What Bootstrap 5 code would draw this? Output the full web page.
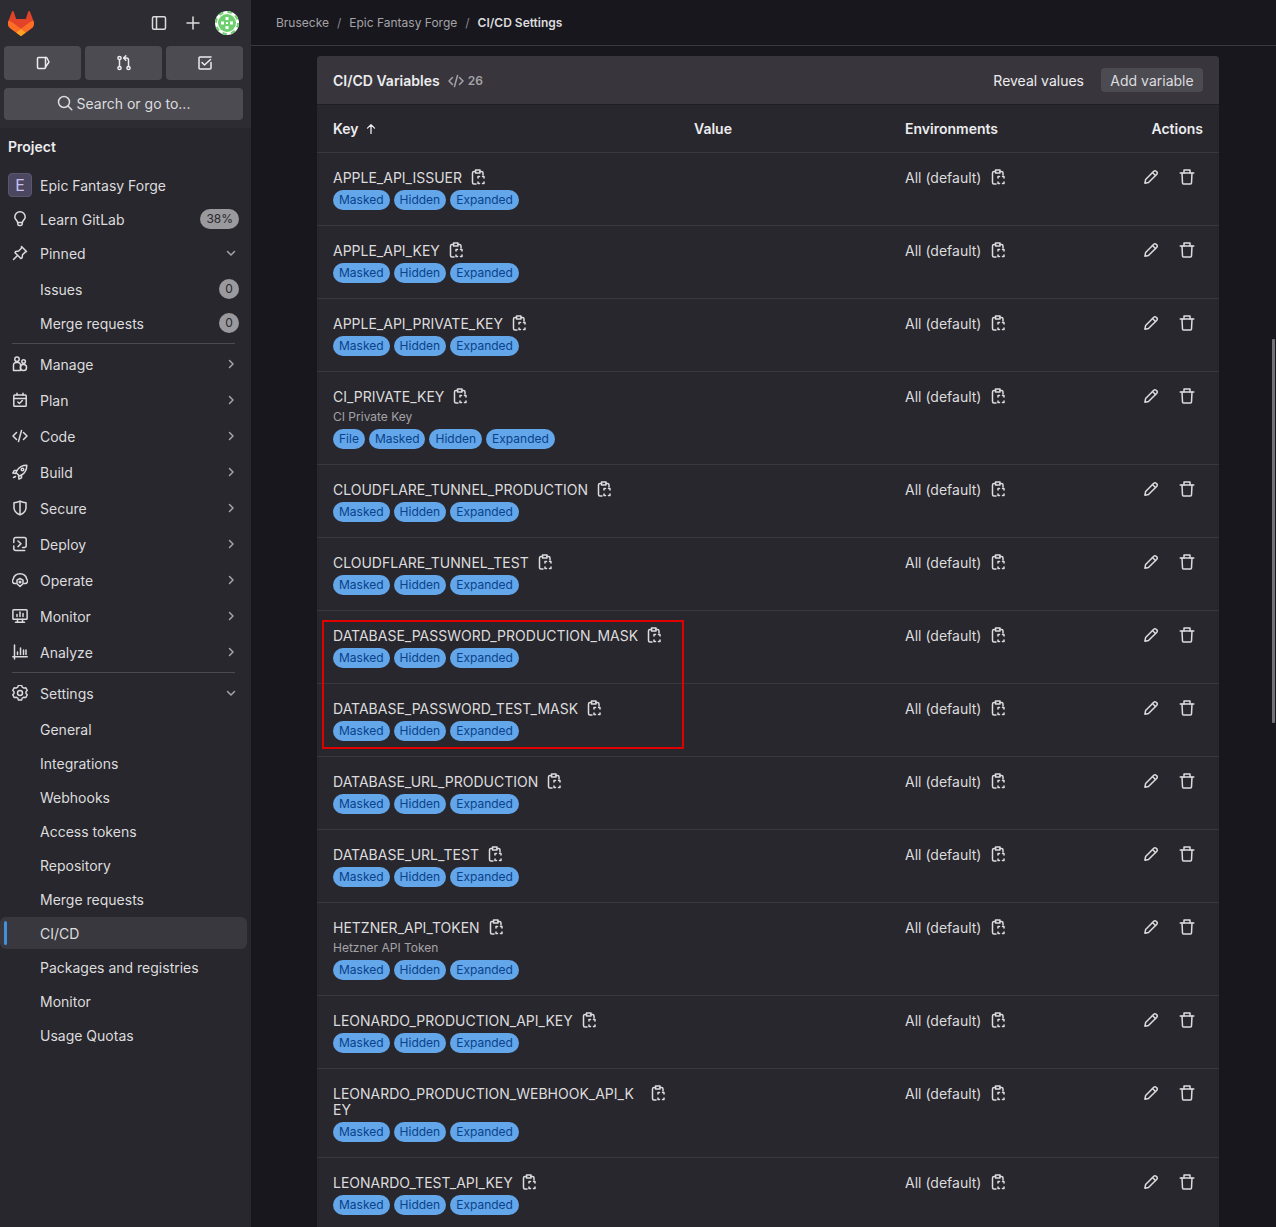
<!DOCTYPE html>
<html lang="en">
<head>
<meta charset="UTF-8">
<title>CI/CD Settings</title>
<link href="https://cdn.jsdelivr.net/npm/bootstrap@5.3.2/dist/css/bootstrap.min.css" rel="stylesheet">
<style>
    html, body { height: 100%; overflow: hidden; }
    body { background: #18171d; color: #ececef; font-family: Inter, "Noto Sans", sans-serif; font-size: 14px; }
    .ico { width: 16px; height: 16px; fill: none; stroke: currentColor; stroke-width: 1.5; stroke-linecap: round; stroke-linejoin: round; flex-shrink: 0; }
    .app-shell { height: 1227px; }
    .side { width: 251px; background: #28272d; flex-shrink: 0; color: #dcdcde; }
    .side-top { background: #2d2c32; height: 128px; padding: 0 4px; }
    .brand-row { height: 46px; padding: 0 8px 0 4px; }
    .plus-ico { margin-left: 18px; margin-right: 14px; }
    .quick-btn { flex: 1; height: 34px; background: #4c4b52; border-radius: 4px; color: #ececef; }
    .search-btn { height: 32px; margin-top: 8px; margin-right: 4px; padding-bottom: 2px; background: #4c4b52; border-radius: 4px; color: #dcdcde; }
    .quick-row { margin-right: 4px; gap: 4px; }
    .side-nav { padding: 0 4px 0 0; }
    .proj-title { font-weight: 600; height: 41px; padding-left: 8px; padding-top: 8px; color: #ececef; }
    .side-item { height: 32px; margin-bottom: 2px; padding-left: 12px; padding-right: 8px; gap: 12px; position: relative; border-radius: 6px; }
    .side-item.grp { margin-bottom: 4px; }
    .side-item .lbl { flex: 1; }
    .side-item .chev { width: 16px; height: 16px; color: #a4a3a8; }
    .side-item.on { background: #3a383f; }
    .side-item.on::before { content: ""; position: absolute; left: 4px; top: 4px; width: 3px; height: 24px; background: #428fdc; border-radius: 2px; }
    .icon-gap { width: 16px; flex-shrink: 0; }
    .proj-av { width: 24px; height: 24px; margin-left: -4px; margin-right: -4px; background: #4b4760; border: 1px solid #5a5670; border-radius: 4px; color: #c9c0f0; font-size: 16px; line-height: 22px; text-align: center; flex-shrink: 0; }
    .cnt-pill { background: #9a999e; color: #28272d; border-radius: 10px; height: 20px; min-width: 20px; padding: 0 6px; font-size: 12px; line-height: 20px; text-align: center; }
    .side-rule { height: 1px; background: #4c4b52; margin: 0 12px 4px 12px; }
    .crumb-bar { height: 46px; border-bottom: 1px solid #3a383f; padding-left: 25px; font-size: 12px; color: #89888d; gap: 8px; }
    .crumb-bar a { color: #a4a3a8; }
    .crumb-bar b { font-weight: 600; color: #dcdcde; }
    .main-wrap { width: 902px; margin-left: 66px; margin-top: 10px; position: relative; }
    .var-box { background: #28272d; border-radius: 4px 4px 0 0; }
    .var-head { height: 49px; background: #38363c; border-bottom: 1px solid #1f1e24; padding: 0 16px; border-radius: 4px 4px 0 0; }
    .var-head b { font-weight: 600; color: #ececef; }
    .var-count { color: #a4a3a8; font-weight: 600; font-size: 12px; gap: 4px; margin-left: 8px; margin-top: 1px; }
    .add-btn { background: #4c4b52; border-radius: 4px; height: 24px; line-height: 25px; width: 102px; text-align: center; color: #dcdcde; margin-left: 17px; }
    .var-table { table-layout: fixed; margin: 0; --bs-table-bg: transparent; --bs-table-color: #ececef; color: #ececef; font-size: 14px; }
    .col-key { width: 361px; }
    .col-val { width: 211px; }
    .col-env { width: 200px; }
    .var-table th { height: 47px; padding: 0 16px; vertical-align: middle; font-weight: 600; border-bottom: 1px solid #3a383f; }
    .var-table td { padding: 17px 16px 15px; line-height: 16px; vertical-align: top; border-bottom: 1px solid #3a383f; color: #dcdcde; }
    .var-table td.key-cell { padding-right: 0; }
    .var-table td.act-cell { padding: 8px 16px 0; }
    .sort-ico { width: 14px; height: 14px; margin-left: 1px; margin-top: 1px; }
    .key-line { display: flex; align-items: flex-start; }
    .key-txt { max-width: 309px; word-break: break-all; }
    .copy-slot { width: 32px; height: 16px; margin-top: -1px; display: flex; align-items: center; justify-content: center; flex-shrink: 0; color: #dcdcde; }
    .env-line .copy-slot { margin-left: 1px; }
    .var-desc { font-size: 12px; color: #a4a3a8; margin-top: 4px; }
    .tag-row { gap: 4px; margin-top: 4px; }
    .var-tag { background: #63a6e9; color: #09428a; font-size: 12px; line-height: 20px; height: 20px; padding: 0 6px; border-radius: 10px; }
    .act-btn { width: 32px; height: 32px; color: #dcdcde; }
    .red-box { position: absolute; left: 5px; top: 564px; width: 362px; height: 129px; border: 2px solid #e00000; pointer-events: none; }
    .fake-scroll { position: fixed; left: 1272px; top: 339px; width: 3px; height: 384px; background: #737278; border-radius: 1px; }
</style>
</head>
<body>

<svg width="0" height="0" class="position-absolute">
    <symbol id="i-copy" viewBox="0 0 16 16"><path d="M5.500 2.500H4A1.500 1.500 0 0 0 2.500 4v9.500A1.500 1.500 0 0 0 4 15h2"/><path d="M5.500 1H10v3H5.500z"/><path d="M10 2.500h1.500A1.500 1.500 0 0 1 13 4v2"/><path d="M8 9V7.500h1.500M12.500 7.500H14V9M14 13v1.500h-1.500M9.500 14.500H8V13"/></symbol>
    <symbol id="i-pencil" viewBox="0 0 16 16"><path d="M10.800 2.200a1.600 1.600 0 0 1 2.300 0l.7.7a1.600 1.600 0 0 1 0 2.300L5.500 13.500l-3.600.7.700-3.600z"/><path d="M9.500 3.500l3 3"/></symbol>
    <symbol id="i-trash" viewBox="0 0 16 16"><path d="M1.200 4h13.600"/><path d="M5 4V.9h6V4"/><path d="M3 4l.5 10a1 1 0 0 0 1 1h7a1 1 0 0 0 1-1L13 4"/></symbol>
    <symbol id="i-down" viewBox="0 0 16 16"><path d="M4.500 6.500L8 10l3.500-3.500"/></symbol>
    <symbol id="i-right" viewBox="0 0 16 16"><path d="M6.500 4.500L10 8l-3.500 3.500"/></symbol>
    <symbol id="i-code" viewBox="0 0 16 16"><path d="M4.500 4.500L1 8l3.500 3.500M11.500 4.500L15 8l-3.500 3.500M9.500 2.500l-3 11"/></symbol>
    <symbol id="i-issues" viewBox="0 0 16 16"><path d="M2.500 3.500a1 1 0 0 1 1-1h7v10a1 1 0 0 1-1 1h-6a1 1 0 0 1-1-1z"/><path d="M10.500 2.500h1.200l2.300 4.500-3.500 5"/></symbol>
    <symbol id="i-mr" viewBox="0 0 16 16"><circle cx="3.500" cy="3" r="1.600"/><circle cx="3.500" cy="13" r="1.600"/><circle cx="12.500" cy="13" r="1.600"/><path d="M3.500 4.600v6.800M12.500 11.400V5a2 2 0 0 0-2-2H8M9.800 .8L7.600 3l2.200 2.200"/></symbol>
    <symbol id="i-todo" viewBox="0 0 16 16"><path d="M14 7.500V13a1 1 0 0 1-1 1H3a1 1 0 0 1-1-1V3a1 1 0 0 1 1-1h11"/><path d="M5 7.500l2.500 2.500L13.500 4.500"/></symbol>
    <symbol id="i-search" viewBox="0 0 16 16"><circle cx="7" cy="7" r="5.500"/><path d="M11 11l3.800 3.800"/></symbol>
    <symbol id="i-panel" viewBox="0 0 16 16"><rect x="1.500" y="1.800" width="13" height="12.400" rx="1.500"/><path d="M5.500 1.800v12.400"/></symbol>
    <symbol id="i-plus" viewBox="0 0 16 16"><path d="M8 2v12M2 8h12"/></symbol>
    <symbol id="i-bulb" viewBox="0 0 16 16"><path d="M5.500 11.500C5.500 9.500 2.800 8.500 2.800 6a5.200 5.200 0 0 1 10.400 0c0 2.500-2.700 3.500-2.700 5.500z"/><path d="M5.800 11.500v1.500a1.500 1.500 0 0 0 1.500 1.500h1.400a1.500 1.500 0 0 0 1.500-1.500v-1.500"/></symbol>
    <symbol id="i-pin" viewBox="0 0 16 16"><path d="M9.500 1.500l5 5-1.300.6-2.700 2.700-.4 3-1.300 .7-5.800-5.800.7-1.300 3-.4 2.700-2.700z"/><path d="M5 11l-3.500 3.500"/></symbol>
    <symbol id="i-manage" viewBox="0 0 16 16"><circle cx="5" cy="3.200" r="2.200"/><path d="M1.500 14.500V9a2.500 2.500 0 0 1 2.500-2.500h1.900A2.500 2.500 0 0 1 8.500 9v5.500z"/><circle cx="11.600" cy="5.500" r="1.800"/><rect x="8.500" y="8.400" width="6" height="6.100" rx="2.800"/></symbol>
    <symbol id="i-plan" viewBox="0 0 16 16"><rect x="1.800" y="3" width="12.400" height="11.200" rx=".8"/><path d="M1.800 6.500h12.400M5 1.200V3M11 1.200V3M5.800 10l1.600 1.500 3-3"/></symbol>
    <symbol id="i-build" viewBox="0 0 16 16"><path d="M5 6.500C7 3 10.500 1.200 14.800 1.200c0 4.300-1.800 7.800-5.300 9.800L7.500 12 4 8.500z"/><circle cx="10.500" cy="5.500" r="1.300"/><path d="M5 6.500H2.200L.8 9l3.200.5M9.500 11v2.800L7 15.200l-.5-3.200M1.500 13.500l2-1"/></symbol>
    <symbol id="i-secure" viewBox="0 0 16 16"><path d="M8 1.200c2 1 4 1.500 6 1.500v4.800c0 3.500-2.500 6-6 7.300-3.500-1.300-6-3.800-6-7.300V2.700c2 0 4-.5 6-1.500z"/><path d="M8 1.500v13"/></symbol>
    <symbol id="i-deploy" viewBox="0 0 16 16"><path d="M1.800 6.500v-3a2 2 0 0 1 2-2h8.400a2 2 0 0 1 2 2v6a2 2 0 0 1-2 2h-1.700"/><path d="M1.800 10v2.500a2 2 0 0 0 2 2h8.900"/><path d="M6 5l3 2.800-3 2.800"/></symbol>
    <symbol id="i-operate" viewBox="0 0 16 16"><path d="M4 11.500H3a2.500 2.500 0 0 1-1.800-4.300A7 7 0 0 1 8 1.800a7 7 0 0 1 6.800 5.400A2.500 2.500 0 0 1 13 11.500h-1"/><path d="M8 6.500l3 1.700v3.600L8 14.500l-3-2.700V8.200z"/><circle cx="8" cy="10" r=".8"/></symbol>
    <symbol id="i-monitor" viewBox="0 0 16 16"><rect x=".9" y="1.800" width="14.200" height="9.500" rx=".8"/><path d="M5.500 11.300v2.900M10.500 11.300v2.900M3.500 14.300h9M5 8.500V6.500M8 8.500V4M11 8.500V5.500"/></symbol>
    <symbol id="i-analyze" viewBox="0 0 16 16"><path d="M2.500 1v14M.8 12.800h14.400M5.500 10.500V8M8.500 10.500V4M11.500 10.500V6M14 10.500V6"/></symbol>
    <symbol id="i-gear" viewBox="0 0 16 16"><path d="M6.300 1.300h3.400l.6 1.900 1.800 1 1.900-.4 1.600 2.900-1.300 1.300v2l1.300 1.300-1.600 2.900-1.900-.4-1.800 1-.6 1.900H6.300l-.6-1.900-1.800-1-1.900.4L.4 11.300 1.700 10V8L.4 6.700 2 3.800l1.900.4 1.800-1z" transform="translate(.4 -.9) scale(.95)"/><circle cx="8" cy="8" r="2.500"/></symbol>
    <symbol id="i-up" viewBox="0 0 16 16"><path d="M8 13V3.500M4 7l4-4 4 4"/></symbol>
</svg>

<div class="app-shell d-flex">
    <aside class="side">
        <div class="side-top">
            <div class="brand-row d-flex align-items-center justify-content-between">
                <svg width="26" height="25" viewBox="0 0 25 24">
                    <path fill="#E24329" d="m24.507 9.500-.034-.09L21.082.562a.896.896 0 0 0-1.694.091l-2.290 7.010H7.825L5.535.653a.898.898 0 0 0-1.694-.09L.451 9.411.416 9.500a6.297 6.297 0 0 0 2.090 7.278l.012.01.03.022 5.160 3.867 2.560 1.935 1.554 1.176a1.051 1.051 0 0 0 1.268 0l1.555-1.176 2.560-1.935 5.197-3.890.014-.01A6.297 6.297 0 0 0 24.507 9.500Z"/>
                    <path fill="#FC6D26" d="m24.507 9.500-.034-.09a11.440 11.440 0 0 0-4.560 2.051l-7.447 5.632 4.742 3.584 5.197-3.890.014-.01A6.297 6.297 0 0 0 24.507 9.500Z"/>
                    <path fill="#FCA326" d="m7.707 20.677 2.560 1.935 1.555 1.176a1.051 1.051 0 0 0 1.268 0l1.555-1.176 2.560-1.935-4.743-3.584-4.755 3.584Z"/>
                    <path fill="#FC6D26" d="M5.010 11.461a11.430 11.430 0 0 0-4.560-2.050L.416 9.500a6.297 6.297 0 0 0 2.090 7.278l.012.01.03.022 5.160 3.867 4.745-3.584-7.444-5.632Z"/>
                </svg>
                <div class="d-flex align-items-center">
                    <svg class="ico"><use href="#i-panel"/></svg>
                    <svg class="ico plus-ico"><use href="#i-plus"/></svg>
                    <svg width="24" height="24" viewBox="0 0 24 24">
                        <circle cx="12" cy="12" r="12" fill="#ffffff"/>
                        <circle cx="12" cy="12" r="9" fill="#6dcf6d"/>
                        <circle cx="12" cy="12" r="11" fill="none" stroke="#6dcf6d" stroke-width="2" stroke-dasharray="4.500 4.150"/>
                        <path fill="#ffffff" d="M10.500 6h3v3h-3zM6 10.500h3v3H6zM15 10.500h3v3h-3zM10.500 15h3v3h-3zM11 11h2v2h-2z"/>
                    </svg>
                </div>
            </div>
            <div class="quick-row d-flex">
                <div class="quick-btn d-flex align-items-center justify-content-center"><svg class="ico"><use href="#i-issues"/></svg></div>
                <div class="quick-btn d-flex align-items-center justify-content-center"><svg class="ico"><use href="#i-mr"/></svg></div>
                <div class="quick-btn d-flex align-items-center justify-content-center"><svg class="ico"><use href="#i-todo"/></svg></div>
            </div>
            <div class="search-btn d-flex align-items-center justify-content-center gap-1"><svg class="ico"><use href="#i-search"/></svg>Search or go to...</div>
        </div>
        <nav class="side-nav" id="sideNav">
            <div class="proj-title">Project</div>
        </nav>
    </aside>

    <main class="flex-grow-1">
        <div class="crumb-bar d-flex align-items-center">
            <a class="text-decoration-none">Brusecke</a><span>/</span>
            <a class="text-decoration-none">Epic Fantasy Forge</a><span>/</span>
            <b>CI/CD Settings</b>
        </div>
        <div class="main-wrap">
            <div class="var-box">
                <div class="var-head d-flex align-items-center">
                    <b>CI/CD Variables</b>
                    <span class="var-count d-flex align-items-center"><svg class="ico"><use href="#i-code"/></svg>26</span>
                    <span class="ms-auto">Reveal values</span>
                    <span class="add-btn">Add variable</span>
                </div>
                <table class="table var-table">
                    <colgroup><col class="col-key"><col class="col-val"><col class="col-env"><col></colgroup>
                    <thead>
                        <tr>
                            <th><span class="d-flex align-items-center gap-1">Key <svg class="ico sort-ico"><use href="#i-up"/></svg></span></th>
                            <th>Value</th>
                            <th>Environments</th>
                            <th class="text-end">Actions</th>
                        </tr>
                    </thead>
                    <tbody id="varRows"></tbody>
                </table>
            </div>
            <div class="red-box"></div>
        </div>
    </main>
</div>
<div class="fake-scroll"></div>

<script>
    const ic = (n, cls = 'ico') => `<svg class="${cls}"><use href="#i-${n}"/></svg>`;

    // sidebar
    const chev = d => `<span class="chev d-flex">${ic(d)}</span>`;
    const rule = '<div class="side-rule"></div>';
    const row = (icon, label, tail = '', cls = '') =>
        `<div class="side-item d-flex align-items-center ${cls}">${icon}<span class="lbl">${label}</span>${tail}</div>`;
    const gap = '<span class="icon-gap"></span>';
    let nav = '';
    nav += row('<span class="proj-av">E</span>', 'Epic Fantasy Forge');
    nav += row(ic('bulb'), 'Learn GitLab', '<span class="cnt-pill">38%</span>');
    nav += row(ic('pin'), 'Pinned', chev('down'), 'grp');
    nav += row(gap, 'Issues', '<span class="cnt-pill px-0">0</span>');
    nav += row(gap, 'Merge requests', '<span class="cnt-pill px-0">0</span>', 'grp');
    nav += rule;
    [['manage', 'Manage'], ['plan', 'Plan'], ['code', 'Code'], ['build', 'Build'], ['secure', 'Secure'],
     ['deploy', 'Deploy'], ['operate', 'Operate'], ['monitor', 'Monitor'], ['analyze', 'Analyze']]
        .forEach(([i, l]) => { nav += row(ic(i), l, chev('right'), 'grp'); });
    nav += rule;
    nav += row(ic('gear'), 'Settings', chev('down'), 'grp');
    ['General', 'Integrations', 'Webhooks', 'Access tokens', 'Repository', 'Merge requests', 'CI/CD',
     'Packages and registries', 'Monitor', 'Usage Quotas']
        .forEach(l => { nav += row(gap, l, '', l === 'CI/CD' ? 'on' : ''); });
    document.getElementById('sideNav').insertAdjacentHTML('beforeend', nav);

    // variables table
    const vars = [
        ['APPLE_API_ISSUER'], ['APPLE_API_KEY'], ['APPLE_API_PRIVATE_KEY'],
        ['CI_PRIVATE_KEY', 'CI Private Key', true],
        ['CLOUDFLARE_TUNNEL_PRODUCTION'], ['CLOUDFLARE_TUNNEL_TEST'],
        ['DATABASE_PASSWORD_PRODUCTION_MASK'], ['DATABASE_PASSWORD_TEST_MASK'],
        ['DATABASE_URL_PRODUCTION'], ['DATABASE_URL_TEST'],
        ['HETZNER_API_TOKEN', 'Hetzner API Token'],
        ['LEONARDO_PRODUCTION_API_KEY'], ['LEONARDO_PRODUCTION_WEBHOOK_API_KEY'], ['LEONARDO_TEST_API_KEY']
    ];
    document.getElementById('varRows').innerHTML = vars.map(([key, desc, file]) => {
        const tags = (file ? ['File'] : []).concat(['Masked', 'Hidden', 'Expanded'])
            .map(t => `<span class="var-tag">${t}</span>`).join('');
        return `<tr>
            <td class="key-cell"><div class="key-line"><span class="key-txt">${key}</span><span class="copy-slot">${ic('copy')}</span></div>
                ${desc ? `<div class="var-desc">${desc}</div>` : ''}
                <div class="tag-row d-flex">${tags}</div></td>
            <td></td>
            <td><div class="key-line env-line">All (default)<span class="copy-slot">${ic('copy')}</span></div></td>
            <td class="act-cell"><div class="d-flex justify-content-end gap-1">
                <span class="act-btn d-flex align-items-center justify-content-center">${ic('pencil')}</span>
                <span class="act-btn d-flex align-items-center justify-content-center">${ic('trash')}</span>
            </div></td>
        </tr>`;
    }).join('');
</script>
<script src="https://cdn.jsdelivr.net/npm/bootstrap@5.3.2/dist/js/bootstrap.bundle.min.js"></script>
</body>
</html>
